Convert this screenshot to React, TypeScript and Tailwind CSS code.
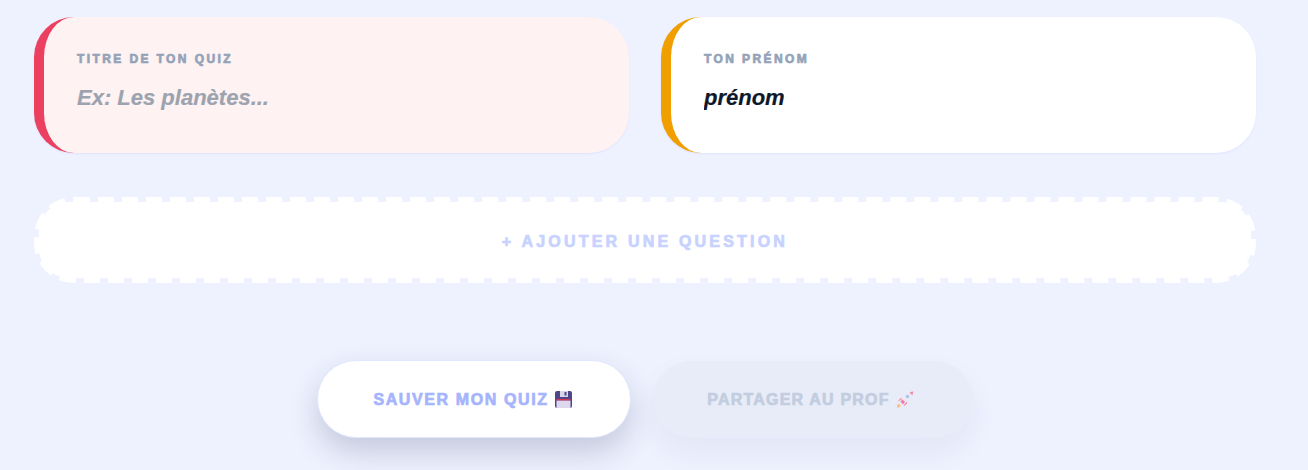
function Field({
  label,
  placeholder,
  value,
  className,
}: {
  label: string;
  placeholder: string;
  value?: string;
  className: string;
}) {
  return (
    <div className={`flex h-[136px] flex-col rounded-[40px] border-l-[10px] pl-[33px] pr-8 pt-[34px] shadow-[0_1px_2px_rgba(99,102,241,0.1)] ${className}`}>
      <label className="text-[12px] leading-[16px] font-black tracking-[2.4px] text-[#94a3b8] uppercase [-webkit-text-stroke:0.7px_#94a3b8]">{label}</label>
      <input
        readOnly
        value={value ?? ""}
        placeholder={placeholder}
        className="mt-[17px] w-full bg-transparent text-[22px] leading-[28px] font-bold italic text-[#0f172a] outline-none [-webkit-text-stroke:0.2px] placeholder:text-[#9ca3af]"
      />
    </div>
  );
}

function FloppyIcon() {
  return (
    <svg viewBox="0 0 17 17" className="ml-[6px] mr-[3px] h-[17px] w-[17px] shrink-0">
      <rect width="17" height="17" rx="2" fill="#4f4689" />
      <rect x="5" y="0" width="8" height="6" fill="#d9d5ea" />
      <rect x="9.5" y="1" width="2" height="3.5" fill="#4f4689" />
      <rect x="1.5" y="8" width="14" height="1.6" fill="#d8344f" />
      <rect x="1.5" y="9.6" width="14" height="7.4" fill="#ded8ee" />
    </svg>
  );
}

function RocketIcon() {
  return (
    <svg viewBox="0 0 18 17" className="ml-[6px] mr-[5px] h-[17px] w-[18px] shrink-0">
      <path d="M1 16.5c-.4-1.8.3-3.2 2-3.8l1.8 1.8c-.6 1.7-2 2.4-3.8 2z" fill="#f3c089" />
      <path d="M4 9.5 1.8 10.6l2.6-3.4 2.2.2zM8.6 13l-1.2 2.6 3.6-2.8-.2-2.2z" fill="#f28bb0" />
      <path d="M4.6 10 12.8 2c1.4-1 3-1.4 4.4-1.4 0 1.5-.4 3.1-1.5 4.5L8 13z" fill="#efe8f1" />
      <path d="M13.6 1.5c1.2-.6 2.4-.9 3.6-.9 0 1.2-.3 2.4-.9 3.6z" fill="#f08aa8" />
      <circle cx="11.5" cy="5.5" r="1.7" fill="#a9c4f0" />
      <path d="M4.4 10.4 6.6 8.6 9 11l-2 2.4z" fill="#ef7fa6" />
    </svg>
  );
}

export default function App() {
  return (
    <div className="h-[470px] overflow-hidden bg-[#eef2ff] pl-[34px] pr-[52px] pt-[17px] font-['Liberation_Sans',Arial,sans-serif]">
      <div className="grid grid-cols-2 gap-8">
        <Field label="Titre de ton quiz" placeholder="Ex: Les planètes..." className="border-[#ec4060] bg-[#fef2f2]" />
        <Field label="Ton prénom" placeholder="" value="prénom" className="border-[#f09e00] bg-white" />
      </div>

      <button className="mt-[44px] block h-[86px] w-full rounded-[40px] border-[8px] border-dashed border-white">
        <span className="-m-[3px] flex h-[calc(100%+6px)] w-[calc(100%+6px)] items-center justify-center rounded-[30px] bg-white pt-[4px] text-[16px] font-black tracking-[3.2px] text-[#c7d2fe] uppercase [-webkit-text-stroke:0.7px_#c7d2fe]">
          + Ajouter une question
        </span>
      </button>

      <div className="mt-[77px] flex items-end justify-center gap-[22px]">
        <button className="flex h-[78px] w-[314px] items-center justify-center rounded-[40px] border border-[#e2e7ff] bg-white pt-[1px] text-[16px] font-black tracking-[1.6px] text-[#a5b4fc] uppercase shadow-[0_14px_30px_rgba(30,41,80,0.2)] [-webkit-text-stroke:0.7px_#a5b4fc]">
          Sauver mon quiz
          <FloppyIcon />
        </button>
        <button className="flex h-[77px] w-[320px] items-center justify-center rounded-[40px] bg-[#e8ecf8] text-[16px] font-black tracking-[1.2px] text-[#c3cde0] uppercase shadow-[0_14px_30px_rgba(30,41,80,0.06)] [-webkit-text-stroke:0.7px_#c3cde0]">
          Partager au prof
          <RocketIcon />
        </button>
      </div>
    </div>
  );
}
